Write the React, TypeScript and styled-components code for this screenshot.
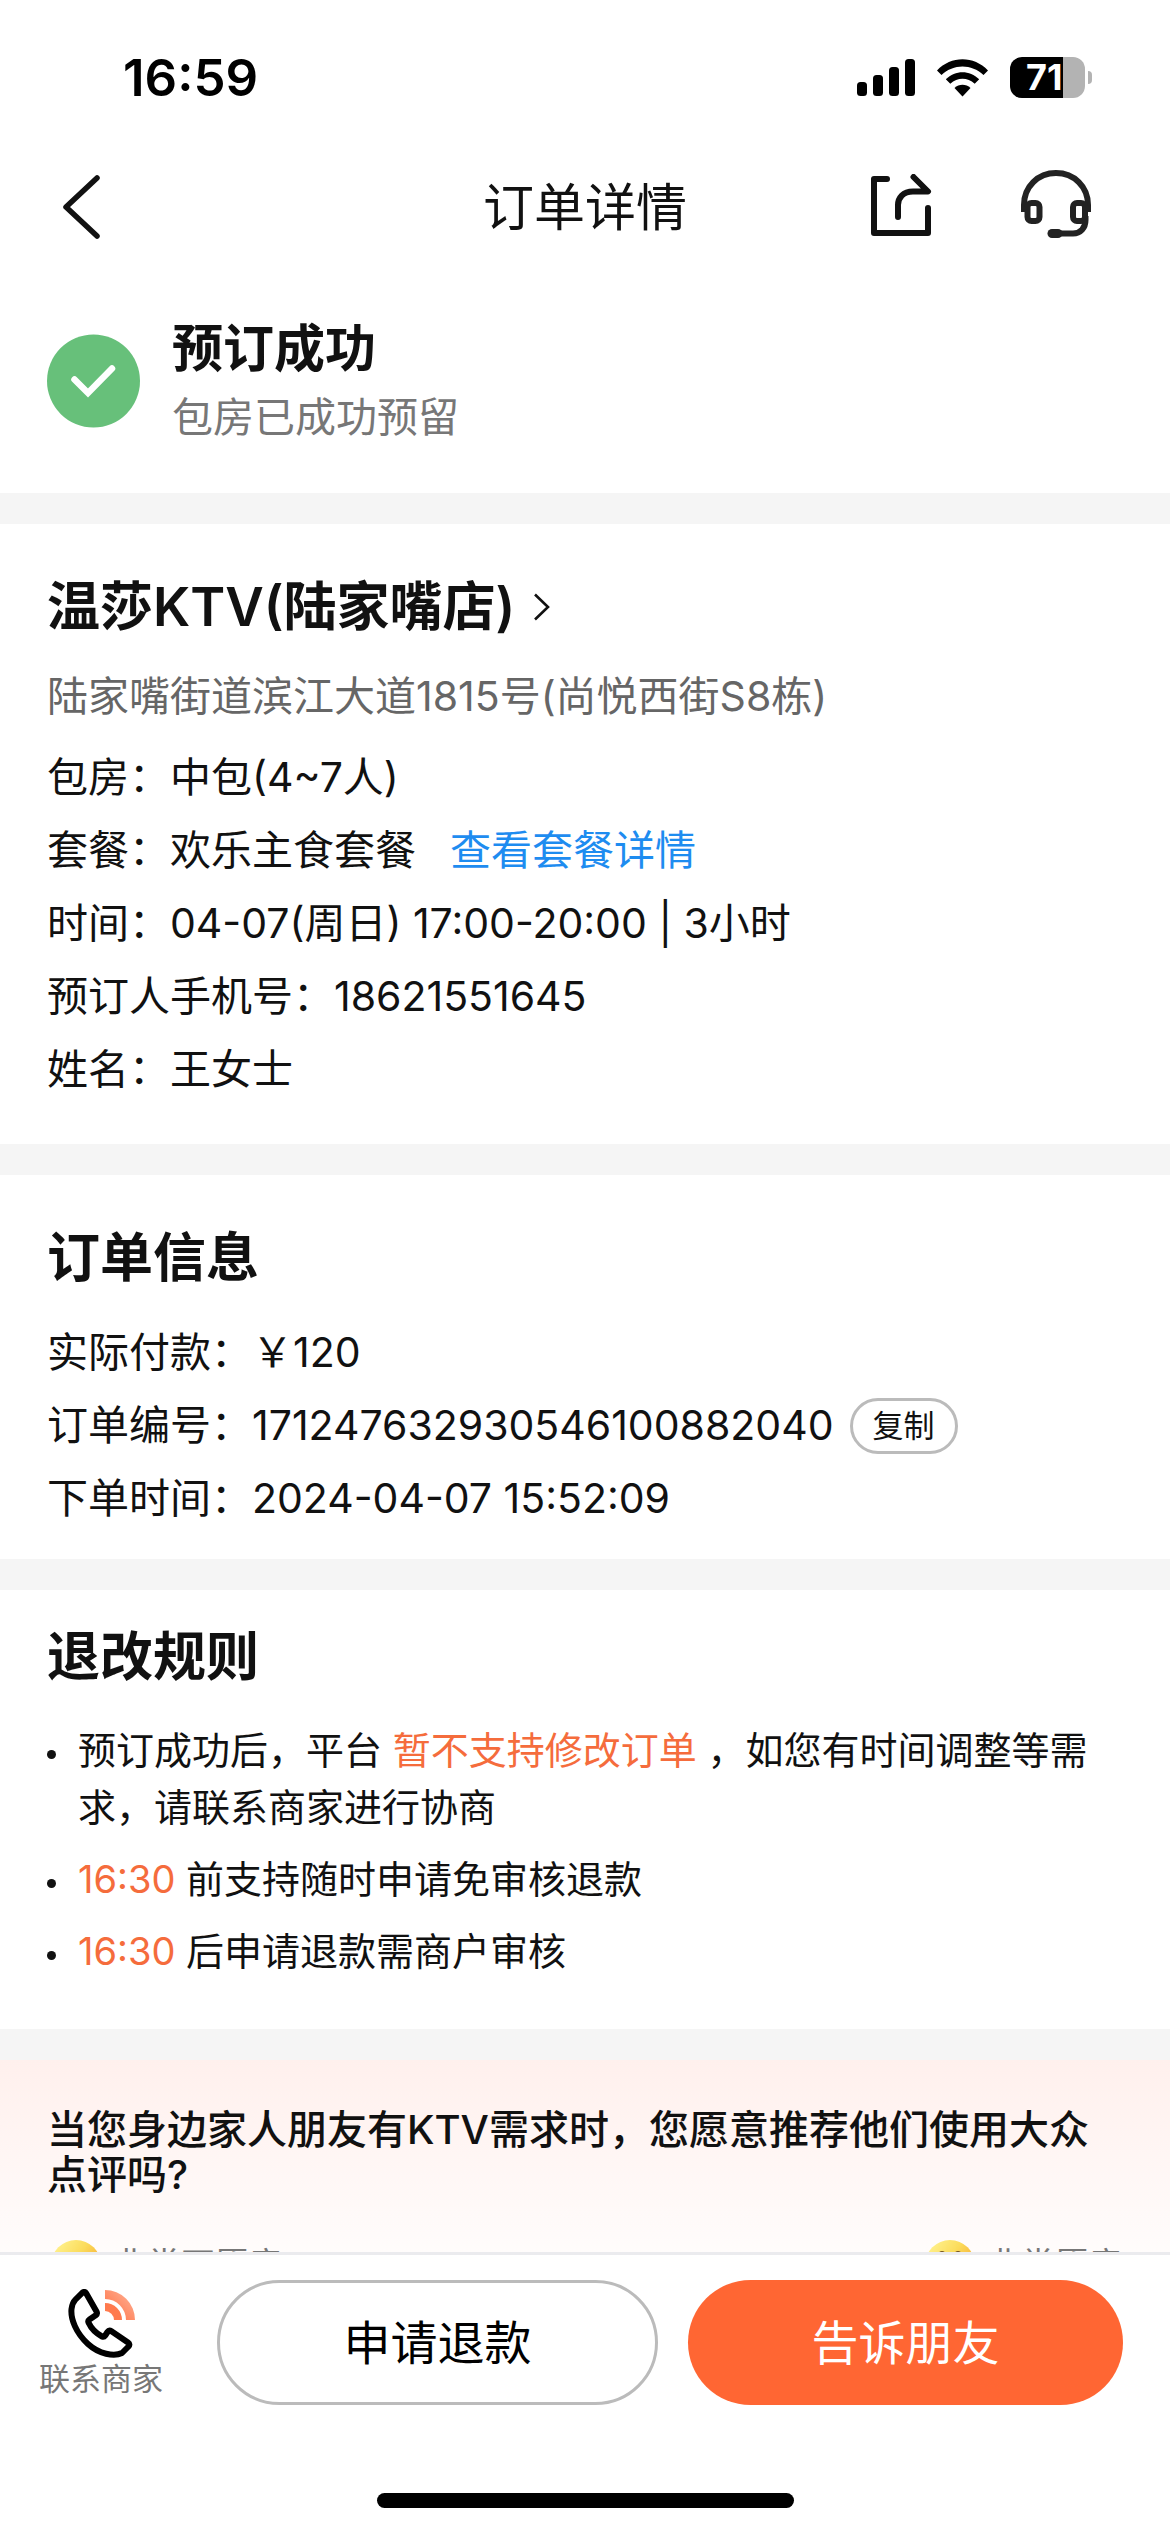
import React from "react";
import styled, { createGlobalStyle } from "styled-components";

const GlobalStyle = createGlobalStyle`
  *, *::before, *::after { box-sizing: border-box; }
  body {
    margin: 0;
    background: #ffffff;
    color: #111111;
    font-family: Inter, "Noto Sans CJK SC", sans-serif;
  }
  h1, h2, p, ul, dl, dd { margin: 0; padding: 0; }
  button { font-family: inherit; cursor: pointer; }
`;

const Screen = styled.div`
  display: flex;
  flex-direction: column;
  height: 100vh;
  overflow: hidden;
`;

const StatusBar = styled.div`
  display: flex;
  flex: none;
  align-items: center;
  justify-content: space-between;
  height: 141px;
  padding: 14px 78px 0 123px;
`;

const Clock = styled.span`
  font-size: 51px;
  font-weight: 600;
  line-height: 60px;
  color: #000000;
`;

const StatusIcons = styled.div`
  display: flex;
  align-items: center;
  gap: 22px;
`;

const BatteryWrap = styled.div`
  display: flex;
  align-items: center;
  gap: 3px;
`;

const Battery = styled.div`
  width: 75px;
  height: 41px;
  padding-left: 16px;
  border-radius: 12px;
  background: linear-gradient(to right, #000000 53px, #b3b3b3 53px);
  color: #ffffff;
  font-size: 36px;
  font-weight: 700;
  line-height: 41px;
`;

const BatteryCap = styled.div`
  width: 4px;
  height: 13px;
  border-radius: 0 6px 6px 0;
  background: #b3b3b3;
`;

const NavBar = styled.header`
  display: grid;
  grid-template-columns: 1fr auto 1fr;
  flex: none;
  align-items: center;
  height: 134px;
  padding: 0 60px;
`;

const NavTitle = styled.h1`
  font-size: 51px;
  font-weight: 400;
  line-height: 72px;
`;

const NavActions = styled.div`
  display: flex;
  align-items: center;
  justify-content: flex-end;
  gap: 88px;
  padding-right: 18px;
`;

const IconButton = styled.button`
  display: flex;
  padding: 0;
  border: 0;
  background: none;
  color: #111111;
`;

const Content = styled.main`
  display: flex;
  flex: 1;
  flex-direction: column;
  gap: 31px;
  min-height: 0;
  overflow-y: auto;
  scrollbar-width: none;
  background: #f5f5f5;
`;

const Section = styled.section<{ $top: number; $bottom: number }>`
  flex: none;
  padding: ${(p) => p.$top}px 47px ${(p) => p.$bottom}px;
  background: #ffffff;
`;

const ResultRow = styled.div`
  display: flex;
  align-items: center;
  gap: 31px;
`;

const ResultTitle = styled.h2`
  font-size: 51px;
  font-weight: 600;
  line-height: 72px;
`;

const ResultNote = styled.p`
  font-size: 41px;
  line-height: 64px;
  color: #777777;
`;

const SectionTitle = styled.h2`
  font-size: 53px;
  font-weight: 600;
  line-height: 76px;
`;

const ShopButton = styled.button`
  display: flex;
  align-items: center;
  gap: 18px;
  padding: 0;
  border: 0;
  background: none;
  color: #111111;
  font-size: 53px;
  font-weight: 600;
  line-height: 76px;
`;

const Address = styled.p`
  margin: 15px 0 8px;
  font-size: 41px;
  line-height: 73px;
  color: #666666;
`;

const Details = styled.dl<{ $top?: number }>`
  margin-top: ${(p) => p.$top ?? 0}px;
`;

const DetailRow = styled.div`
  display: flex;
  align-items: center;
  height: 73px;
  font-size: 41px;
  line-height: 73px;
  white-space: nowrap;

  dd {
    display: flex;
    align-items: center;
  }
`;

const DetailLink = styled.a`
  margin-left: 34px;
  color: #1e8cf0;
  text-decoration: none;
`;

const CopyButton = styled.button`
  width: 108px;
  height: 56px;
  margin-left: 16px;
  padding: 0;
  border: 3px solid #bbbbbb;
  border-radius: 28px;
  background: #ffffff;
  color: #111111;
  font-size: 31px;
  line-height: 48px;
`;

const Rules = styled.ul`
  display: flex;
  flex-direction: column;
  gap: 15px;
  margin-top: 27px;
  list-style: none;
`;

const Rule = styled.li`
  display: flex;
  gap: 22px;
  font-size: 38px;
  line-height: 57px;

  &::before {
    content: "";
    flex: none;
    width: 9px;
    height: 9px;
    margin-top: 28px;
    border-radius: 50%;
    background: #111111;
  }
`;

const Accent = styled.em`
  font-style: normal;
  color: #f56c3c;
`;

const Survey = styled.section`
  flex: none;
  padding: 47px 47px 64px;
  background: linear-gradient(#fff0ed, #ffffff 240px);
`;

const SurveyTitle = styled.h2`
  font-size: 40px;
  font-weight: 500;
  line-height: 45px;
`;

const SurveyScale = styled.div`
  display: flex;
  justify-content: space-between;
  margin-top: 43px;
  padding-left: 4px;
`;

const SurveyEnd = styled.div`
  display: flex;
  align-items: center;
  gap: 12px;
  height: 50px;
  font-size: 34px;
  line-height: 50px;
  color: #777777;
`;

const Footer = styled.footer`
  display: flex;
  flex: none;
  flex-direction: column;
  align-items: center;
  justify-content: space-between;
  height: 280px;
  padding-bottom: 24px;
  border-top: 3px solid #ebebee;
  background: #ffffff;
`;

const Actions = styled.div`
  display: flex;
  gap: 30px;
  width: 100%;
  padding: 25px 47px 0 39px;
`;

const ContactButton = styled.button`
  display: flex;
  flex: none;
  flex-direction: column;
  align-items: center;
  width: 148px;
  padding: 9px 24px 0 0;
  border: 0;
  background: none;
  color: #777777;
  font-size: 31px;
  line-height: 40px;
  white-space: nowrap;
`;

const PillButton = styled.button<{ $primary?: boolean }>`
  flex: 1;
  height: 125px;
  padding: 0;
  border: ${(p) => (p.$primary ? "0" : "3px solid #bbbbbb")};
  border-radius: 63px;
  background: ${(p) => (p.$primary ? "#ff6633" : "#ffffff")};
  color: ${(p) => (p.$primary ? "#ffffff" : "#000000")};
  font-size: 47px;
  font-weight: 400;
  line-height: 70px;
`;

const HomeIndicator = styled.div`
  width: 417px;
  height: 15px;
  border-radius: 8px;
  background: #000000;
`;

const SignalIcon = () => (
  <svg width="58" height="37" viewBox="0 0 58 37" aria-hidden="true">
    <rect x="0" y="23" width="10" height="14" rx="3.5" />
    <rect x="16" y="16" width="10" height="21" rx="3.5" />
    <rect x="32" y="8" width="10" height="29" rx="3.5" />
    <rect x="48" y="0" width="10" height="37" rx="3.5" />
  </svg>
);

const WifiIcon = () => (
  <svg width="51" height="38" viewBox="0 0 51 38" aria-hidden="true">
    <path d="M0 11.5C14-3.5 37-3.5 51 11.5L46.500 16C34.500 4.500 16.500 4.500 4.500 16Z" />
    <path d="M8.800 20.300C18.500 10.800 32.500 10.800 42.200 20.300L37.700 24.800C30.500 18 20.500 18 13.300 24.800Z" />
    <path d="M17.500 29C22 24.600 29 24.600 33.500 29L25.500 37.500Z" />
  </svg>
);

const BackIcon = () => (
  <svg width="42" height="68" viewBox="0 0 42 68" fill="none" stroke="currentColor" aria-hidden="true">
    <path d="M37 4L6 33L37 62" strokeWidth="5.500" strokeLinecap="round" strokeLinejoin="round" />
  </svg>
);

const ShareIcon = () => (
  <svg width="62" height="68" viewBox="0 2 62 68" fill="none" stroke="currentColor" aria-hidden="true">
    <g strokeWidth="6" strokeLinecap="round" strokeLinejoin="round">
      <path d="M17 7H4V61H58V36" />
      <path d="M43.500 5L58 19.500H43C33 19.500 28 26 28 33V45" />
    </g>
  </svg>
);

const HeadsetIcon = () => (
  <svg width="72" height="76" viewBox="0 2 72 76" fill="none" stroke="#222222" strokeWidth="6" aria-hidden="true">
    <path d="M4 44V37C4 18.500 18 5 36 5S68 18.500 68 37V44" />
    <rect x="7.500" y="35" width="12" height="18" rx="4" />
    <rect x="53" y="35" width="12" height="18" rx="4" />
    <path d="M65.500 48V52C65.500 60 60.500 65.500 53 65.500H38" />
    <path d="M32 65.500H38" strokeWidth="9" strokeLinecap="round" />
  </svg>
);

const CheckIcon = () => (
  <svg width="94" height="94" viewBox="0 0 94 94" fill="none" aria-hidden="true">
    <circle cx="46.500" cy="47" r="46.500" fill="#67c07a" />
    <path d="M27.500 45.500L41 59L65 34.500" stroke="#ffffff" strokeWidth="6.500" strokeLinecap="round" />
  </svg>
);

const ChevronIcon = () => (
  <svg width="18" height="28" viewBox="0 0 18 28" fill="none" stroke="currentColor" aria-hidden="true">
    <path d="M2 1.500L15 14L2 26.500" strokeWidth="2.600" />
  </svg>
);

const PhoneIcon = () => (
  <svg width="70" height="70" viewBox="-2 0 70 70" fill="none" aria-hidden="true">
    <defs>
      <linearGradient id="wave" x1="0" y1="1" x2="1" y2="0">
        <stop offset="0" stopColor="#ff6a3c" />
        <stop offset="1" stopColor="#ffb79c" />
      </linearGradient>
    </defs>
    <path
      d="M14.500 3.600C15.800 2.500 17.200 2.700 18 4L28.500 22.500C29.300 24 29 25.300 27.700 26.300L21.500 30.500C20.300 31.300 20 32.500 20.600 33.800C23.500 40 28 44.300 34 47.500C35.300 48.100 36.300 47.800 37.200 46.500L39.500 43C40.500 41.500 42 41.300 43.500 42.300L60 53.500C61.600 54.600 61.800 56 60.500 57.500L54 64C46 68 31 65 20 55C8 44 2.500 30 3.500 20C4 16 5 13 7.500 10.500Z"
      stroke="#000000"
      strokeWidth="6"
      strokeLinejoin="round"
    />
    <path d="M37 1A30 30 0 0 1 67 31H58A21 21 0 0 0 37 10Z" fill="url(#wave)" />
    <path d="M37 14A17 17 0 0 1 54 31H46A9 9 0 0 0 37 22Z" fill="#ff7a4e" />
  </svg>
);

const FaceIcon = ({ happy }: { happy?: boolean }) => {
  const gradientId = happy ? "face-happy" : "face-sad";
  return (
    <svg width="50" height="50" viewBox="0 0 50 50" fill="none" aria-hidden="true">
      <defs>
        <linearGradient id={gradientId} x1="0.200" y1="0" x2="1" y2="0.600">
          <stop offset="0" stopColor="#fff08a" />
          <stop offset="0.450" stopColor="#fbdc5c" />
          <stop offset="1" stopColor="#f6a52c" />
        </linearGradient>
      </defs>
      <circle cx="25" cy="25" r="25" fill={`url(#${gradientId})`} />
      <g stroke="#6b4a1c" strokeWidth="2.500" strokeLinecap="round">
        {happy ? (
          <path d="M14 14Q17 10.500 20 14M30 14Q33 10.500 36 14M14 30Q25 44 36 30" />
        ) : (
          <path d="M14 22H20M30 22H36M16 38Q25 29 34 38" />
        )}
      </g>
    </svg>
  );
};

const bookingDetails = [
  { label: "包房：", value: "中包(4~7人)" },
  { label: "套餐：", value: "欢乐主食套餐", link: "查看套餐详情" },
  { label: "时间：", value: "04-07(周日) 17:00-20:00 | 3小时" },
  { label: "预订人手机号：", value: "18621551645" },
  { label: "姓名：", value: "王女士" },
];

export default function App() {
  return (
    <>
      <GlobalStyle />
      <Screen>
        <StatusBar>
          <Clock>16:59</Clock>
          <StatusIcons>
            <SignalIcon />
            <WifiIcon />
            <BatteryWrap>
              <Battery>71</Battery>
              <BatteryCap />
            </BatteryWrap>
          </StatusIcons>
        </StatusBar>

        <NavBar>
          <IconButton aria-label="返回">
            <BackIcon />
          </IconButton>
          <NavTitle>订单详情</NavTitle>
          <NavActions>
            <IconButton aria-label="分享">
              <ShareIcon />
            </IconButton>
            <IconButton aria-label="客服">
              <HeadsetIcon />
            </IconButton>
          </NavActions>
        </NavBar>

        <Content>
          <Section $top={38} $bottom={44}>
            <ResultRow>
              <CheckIcon />
              <div>
                <ResultTitle>预订成功</ResultTitle>
                <ResultNote>包房已成功预留</ResultNote>
              </div>
            </ResultRow>
          </Section>

          <Section $top={45} $bottom={38}>
            <h2>
              <ShopButton>
                温莎KTV(陆家嘴店)
                <ChevronIcon />
              </ShopButton>
            </h2>
            <Address>陆家嘴街道滨江大道1815号(尚悦西街S8栋)</Address>
            <Details>
              {bookingDetails.map((item) => (
                <DetailRow key={item.label}>
                  <dt>{item.label}</dt>
                  <dd>
                    {item.value}
                    {item.link && <DetailLink href="#package">{item.link}</DetailLink>}
                  </dd>
                </DetailRow>
              ))}
            </Details>
          </Section>

          <Section $top={45} $bottom={24}>
            <SectionTitle>订单信息</SectionTitle>
            <Details $top={20}>
              <DetailRow>
                <dt>实际付款：</dt>
                <dd>￥120</dd>
              </DetailRow>
              <DetailRow>
                <dt>订单编号：</dt>
                <dd>
                  171247632930546100882040
                  <CopyButton>复制</CopyButton>
                </dd>
              </DetailRow>
              <DetailRow>
                <dt>下单时间：</dt>
                <dd>2024-04-07 15:52:09</dd>
              </DetailRow>
            </Details>
          </Section>

          <Section $top={29} $bottom={49}>
            <SectionTitle>退改规则</SectionTitle>
            <Rules>
              <Rule>
                <p>
                  预订成功后，平台 <Accent>暂不支持修改订单</Accent> ，如您有时间调整等需求，请联系商家进行协商
                </p>
              </Rule>
              <Rule>
                <p>
                  <Accent>16:30</Accent> 前支持随时申请免审核退款
                </p>
              </Rule>
              <Rule>
                <p>
                  <Accent>16:30</Accent> 后申请退款需商户审核
                </p>
              </Rule>
            </Rules>
          </Section>

          <Survey>
            <SurveyTitle>当您身边家人朋友有KTV需求时，您愿意推荐他们使用大众点评吗?</SurveyTitle>
            <SurveyScale>
              <SurveyEnd>
                <FaceIcon />
                非常不愿意
              </SurveyEnd>
              <SurveyEnd>
                <FaceIcon happy />
                非常愿意
              </SurveyEnd>
            </SurveyScale>
          </Survey>
        </Content>

        <Footer>
          <Actions>
            <ContactButton>
              <PhoneIcon />
              联系商家
            </ContactButton>
            <PillButton>申请退款</PillButton>
            <PillButton $primary>告诉朋友</PillButton>
          </Actions>
          <HomeIndicator />
        </Footer>
      </Screen>
    </>
  );
}
